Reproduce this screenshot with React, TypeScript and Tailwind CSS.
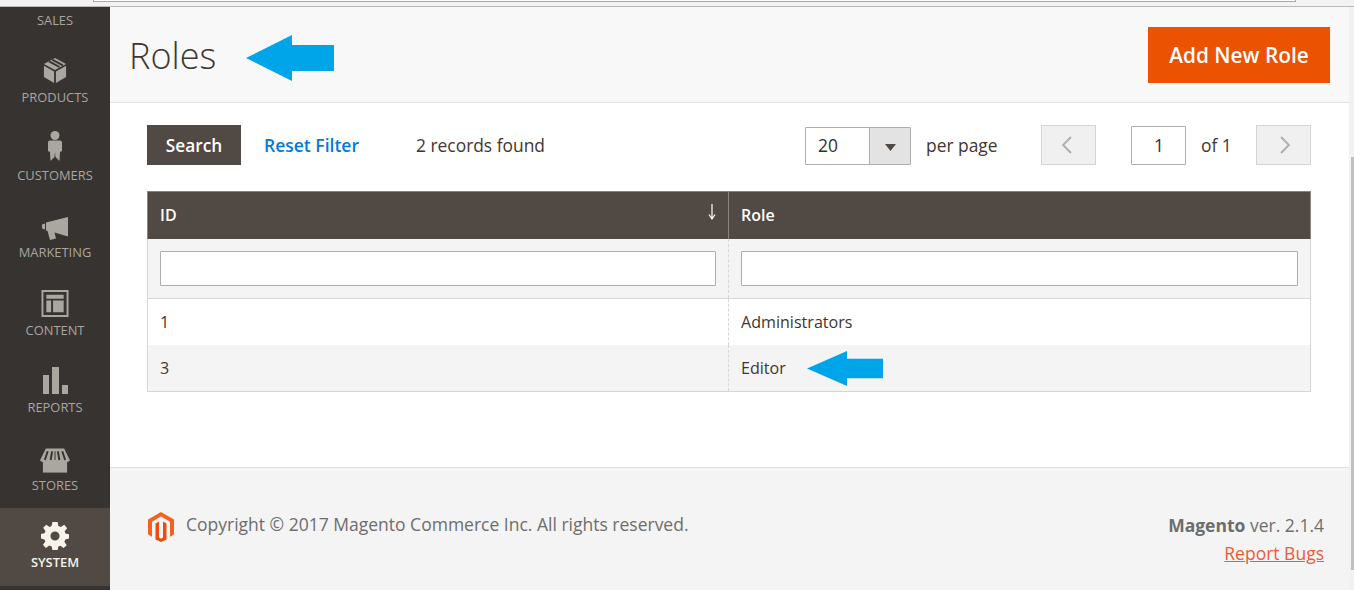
import React from "react";

const NavIcon = ({ name }: { name: string }) => {
  const c = "#aaa6a0";
  if (name === "products")
    return (
      <svg width="24" height="26" viewBox="0 0 26 28">
        <path fill={c} d="M13 1 25 7.500 13 14 1 7.500Z" />
        <path fill={c} d="M1 9.500 12 15.500V28L1 21.500Z" />
        <path fill={c} d="M25 9.500 14 15.500V28L25 21.500Z" />
        <path stroke="#373330" strokeWidth="2" fill="none" d="M6.500 4.600 18 10.800M10 2.800 21.500 9" />
      </svg>
    );
  if (name === "customers")
    return (
      <svg width="14" height="30" viewBox="0 0 14 30">
        <circle cx="7" cy="4.500" r="4.500" fill={c} />
        <path fill={c} d="M2 9.500H12Q14 9.500 14 11.500V20L12 21 11.500 30 7.500 26 7 21 6.500 26 2.500 30 2 21 0 20V11.500Q0 9.500 2 9.500Z" />
      </svg>
    );
  if (name === "marketing")
    return (
      <svg width="26" height="23" viewBox="0 0 26 23">
        <path fill={c} d="M0 7.500 3 6.500V12.500L0 11.500Z" />
        <path fill={c} d="M4 5.500 26 0V19.500L12.500 15.500 14 21.500 8 23 5.500 14 4 13.500Z" />
      </svg>
    );
  if (name === "content")
    return (
      <svg width="28" height="27" viewBox="0 0 28 28">
        <path fill={c} fillRule="evenodd" d="M0 0H28V28H0ZM2 2V26H26V2Z" />
        <path fill={c} d="M5 5H23V9H5ZM5 11H10V23H5ZM12 11H23V23H12Z" />
      </svg>
    );
  if (name === "reports")
    return (
      <svg width="25" height="27" viewBox="0 0 25 27">
        <path fill={c} d="M0 8H6V27H0ZM9 0H16V27H9ZM19 18H25V27H19Z" />
      </svg>
    );
  if (name === "stores")
    return (
      <svg width="30" height="25" viewBox="0 0 31 25">
        <path fill={c} d="M3 13H28V25H3Z" />
        <path fill={c} d="M6 0H25L31 12.500Q29 14.500 26.500 14H4.500Q2 14.500 0 12.500Z" />
        <path stroke="#373330" strokeWidth="2" fill="none" d="M8 3 5 12M12.500 3 11 12M18.500 3 20 12M23 3 26 12" />
        <path stroke="#373330" strokeWidth="1" fill="none" d="M15.500 3V12" />
      </svg>
    );
  return (
    <svg width="28" height="28" viewBox="0 0 29 29">
      <path
        fill="#f7f3eb"
        fillRule="evenodd"
        d="M11.800 0H17.200L18 4.200 20.500 5.300 24.100 2.800 27.100 6.400 24.500 9.600 25.300 12 29 12.800V17.200L25.200 18 24.200 20.500 26.700 24 23.400 27 20 24.500 18 25.300 17.200 29H11.800L11 25.300 8.600 24.400 5 26.900 2 23.600 4.500 20.200 3.600 18 0 17.200V12.500L3.700 11.700 4.600 9.300 2.200 6 5.500 2.800 8.800 5.200 11 4.200ZM14.500 9.800A4.700 4.700 0 1 0 14.500 19.200 4.700 4.700 0 1 0 14.500 9.800Z"
      />
    </svg>
  );
};

const navItems = [
  { name: "products", label: "PRODUCTS", pad: "pt-[14px]" },
  { name: "customers", label: "CUSTOMERS", pad: "pt-[10px]" },
  { name: "marketing", label: "MARKETING", pad: "pt-[19px]" },
  { name: "content", label: "CONTENT", pad: "pt-[14.500px]" },
  { name: "reports", label: "REPORTS", pad: "pt-[14px]" },
  { name: "stores", label: "STORES", pad: "pt-[17.500px]" },
  { name: "system", label: "SYSTEM", pad: "pt-[14px]" },
];

const Arrow = ({ w, h, head }: { w: number; h: number; head: number }) => {
  const t = h * 0.22;
  return (
    <svg width={w} height={h} viewBox={`0 0 ${w} ${h}`} className="shrink-0">
      <path
        fill="#00a5e9"
        d={`M0 ${h / 2} ${head} 0V${t} H${w} V${h - t} H${head} V${h}Z`}
      />
    </svg>
  );
};

export default function App() {
  return (
    <div className="w-[1354px] h-[590px] overflow-hidden flex flex-col bg-white text-[#303030] font-['Open_Sans',sans-serif]">
      <div className="h-[7px] shrink-0 bg-[#f2f2f2] border-b border-[#b9b9b9]">
        <div className="ml-[93px] w-[1203px] h-[2px] bg-white border border-t-0 border-[#a9a9a9]" />
      </div>
      <div className="flex flex-1 min-h-0">
        <aside className="w-[110px] shrink-0 bg-[#373330] overflow-hidden">
          <div className="h-[36px] text-center text-[12.900px] leading-[26px] text-[#aaa6a0]">SALES</div>
          {navItems.map((n) => {
            const active = n.name === "system";
            return (
              <div
                key={n.name}
                className={`h-[77.5px] relative flex flex-col items-center ${n.pad} ${active ? "bg-[#514943] text-[#f7f3eb] font-semibold" : "text-[#aaa6a0]"}`}
              >
                <NavIcon name={n.name} />
                <div className="absolute left-0 right-0 top-[45px] text-center text-[12.900px] leading-[18px]">{n.label}</div>
              </div>
            );
          })}
        </aside>
        <main className="flex-1 flex flex-col min-w-0">
          <header className="h-[96px] shrink-0 bg-[#f8f8f8] border-b border-[#e3e3e3] pl-[20px] pr-[19px] flex items-start justify-between">
            <div className="flex items-center h-[95px] pt-[3px]">
              <h1 className="text-[36px] font-light leading-none text-[#41362f] w-[117px] -ml-[1px] -mt-[1px]">Roles</h1>
              <div className="mt-[4px]"><Arrow w={88} h={46} head={46} /></div>
            </div>
            <button className="mt-[20px] w-[182px] h-[56px] pt-[2px] bg-[#eb5202] text-white text-[20.800px] font-semibold">Add New Role</button>
          </header>
          <section className="h-[364px] shrink-0 bg-white pl-[37px] pt-[22px]">
            <div className="flex items-center h-[40px] w-[1164px] text-[17.400px]">
              <button className="w-[94px] h-[40px] pt-[1px] bg-[#514943] text-white font-semibold text-[17.300px]">Search</button>
              <a className="ml-[23px] w-[152px] text-[#007bdb] font-semibold text-[17.500px]">Reset Filter</a>
              <span className="w-[389px] text-[#41362f]">2 records found</span>
              <div className="w-[106px] h-[38px] mt-[2px] flex border border-[#adadad] rounded-[1px]">
                <div className="flex-1 pl-[12px] leading-[34px] text-[#303030]">20</div>
                <div className="w-[41px] bg-[#e3e3e3] border-l border-[#adadad] flex items-center justify-center">
                  <svg width="11" height="7" viewBox="0 0 11 7" className="mt-[3px]">
                    <path fill="#514943" d="M0 0H11L5.500 7Z" />
                  </svg>
                </div>
              </div>
              <span className="ml-[15px] w-[115px] text-[#41362f]">per page</span>
              <button className="w-[55px] h-[40px] pr-[4px] bg-[#f0f0f0] border border-[#d4d4d4] flex items-center justify-center">
                <svg width="11" height="18" viewBox="0 0 11 18"><path fill="none" stroke="#adadad" strokeWidth="1.800" d="M10 1 2 9 10 17" /></svg>
              </button>
              <div className="ml-[35px] w-[55px] h-[39px] mt-[1px] pl-[1px] border border-[#adadad] rounded-[1px] text-center leading-[37px] text-[#303030]">1</div>
              <span className="ml-[15px] w-[55px] text-[#41362f]">of 1</span>
              <button className="w-[55px] h-[40px] pl-[4px] bg-[#f0f0f0] border border-[#d4d4d4] flex items-center justify-center">
                <svg width="11" height="18" viewBox="0 0 11 18"><path fill="none" stroke="#adadad" strokeWidth="1.800" d="M1 1 9 9 1 17" /></svg>
              </button>
            </div>
            <table className="mt-[26px] w-[1164px] table-fixed border-collapse text-[16.100px] border-b border-[#d6d6d6]">
              <colgroup>
                <col className="w-[581px]" />
                <col />
              </colgroup>
              <thead>
                <tr className="h-[47px] bg-[#514943] text-white font-semibold text-left text-[16px]">
                  <th className="font-semibold pl-[12px] border-t border-l border-[#8a837f] relative">
                    ID
                    <span className="absolute right-[11px] top-[11px]">
                      <svg width="10" height="18" viewBox="0 0 10 18"><path fill="none" stroke="#fff" strokeWidth="1.200" d="M5 1V15M2 11.500 5 16 8 11.500" /></svg>
                    </span>
                  </th>
                  <th className="font-semibold pl-[12px] border-t border-l border-r border-[#8a837f]">Role</th>
                </tr>
                <tr className="h-[60px] bg-[#f4f4f4]">
                  <td className="pl-[12px] border-l border-r border-b border-[#d6d6d6] [border-right-style:dashed]">
                    <div className="w-[556px] h-[35px] bg-white border border-[#adadad] rounded-[1px]" />
                  </td>
                  <td className="pl-[12px] border-r border-b border-[#d6d6d6]">
                    <div className="w-[557px] h-[35px] bg-white border border-[#adadad] rounded-[1px]" />
                  </td>
                </tr>
              </thead>
              <tbody>
                <tr className="h-[46px] bg-white">
                  <td className="pl-[12px] border-l border-r border-[#d6d6d6] [border-right-style:dashed] text-[#41362f]">1</td>
                  <td className="pl-[12px] border-r border-[#d6d6d6] text-[#41362f]">Administrators</td>
                </tr>
                <tr className="h-[47px] bg-[#f4f4f4]">
                  <td className="pl-[12px] pt-[1px] border-l border-r border-[#d6d6d6] [border-right-style:dashed] text-[#41362f]">3</td>
                  <td className="pl-[12px] pt-[1px] border-r border-[#d6d6d6] text-[#41362f]">
                    <div className="flex items-center gap-[20px]">
                      <span className="w-[46px]">Editor</span>
                      <Arrow w={76} h={35} head={40} />
                    </div>
                  </td>
                </tr>
              </tbody>
            </table>
          </section>
          <footer className="flex-1 bg-[#f4f4f4] border-t border-[#dfdfdf] pl-[38px] pr-[25px] flex justify-between text-[17.500px] text-[#6d6d6d]">
            <div className="flex items-start pt-[44px] gap-[12px]">
              <svg width="26" height="30" viewBox="0 0 26 30" className="shrink-0">
                <path fill="#f26322" d="M13 0 26 7.500V22.500L22 24.800V9.800L13 4.600 4 9.800V24.800L0 22.500V7.500Z" />
                <path fill="#ec4c0c" d="M11 9.500V25.500L13 26.700 15 25.500V9.500L18.500 11.500V27.500L13 30 7.500 27.500V11.500Z" />
              </svg>
              <span className="leading-[24px]">Copyright © 2017 Magento Commerce Inc. All rights reserved.</span>
            </div>
            <div className="text-right pt-[43px] leading-[28px]">
              <div><b className="font-bold">Magento</b> ver. 2.1.4</div>
              <a className="underline text-[#ef5a3a]">Report Bugs</a>
            </div>
          </footer>
        </main>
        <div className="w-[5px] shrink-0 bg-[#f1f1f1] flex flex-col">
          <div className="h-[150px]" />
          <div className="h-[413px] ml-[2px] bg-[#c1c1c1]" />
        </div>
      </div>
    </div>
  );
}
